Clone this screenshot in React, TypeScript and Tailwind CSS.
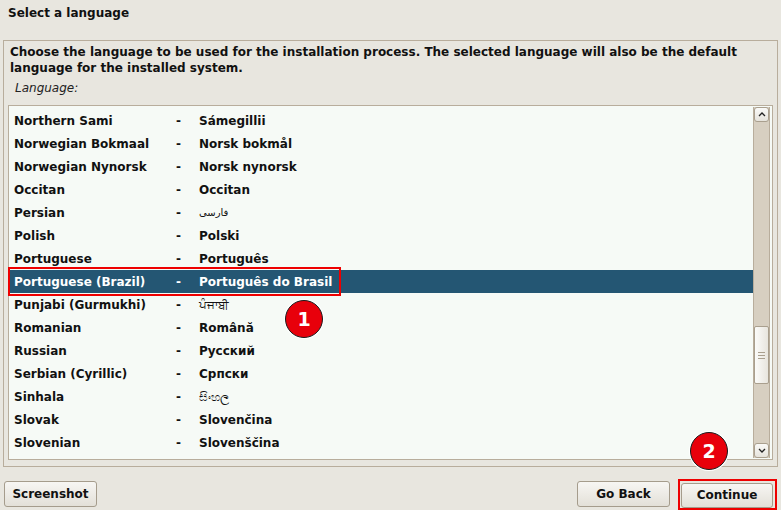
const rows: [string, string, boolean?][] = [
  ["Northern Sami", "Sámegillii"],
  ["Norwegian Bokmaal", "Norsk bokmål"],
  ["Norwegian Nynorsk", "Norsk nynorsk"],
  ["Occitan", "Occitan"],
  ["Persian", "فارسی", true],
  ["Polish", "Polski"],
  ["Portuguese", "Português"],
  ["Portuguese (Brazil)", "Português do Brasil"],
  ["Punjabi (Gurmukhi)", "ਪੰਜਾਬੀ", true],
  ["Romanian", "Română"],
  ["Russian", "Русский"],
  ["Serbian (Cyrillic)", "Српски"],
  ["Sinhala", "සිංහල", true],
  ["Slovak", "Slovenčina"],
  ["Slovenian", "Slovenščina"],
];

const SELECTED = 7;

function Badge({ n }: { n: number }) {
  return (
    <div className="absolute w-[38px] h-[38px] rounded-full bg-[#e8000b] border border-[#1a1a1a] shadow-[0_0_0_1px_#ffffff] flex items-center justify-center text-white text-[19px] font-bold">
      {n}
    </div>
  );
}

export default function App() {
  return (
    <div
      className="relative w-[781px] h-[510px] bg-[#e8e6df] text-[#111] flex flex-col overflow-hidden"
      style={{ fontFamily: '"DejaVu Sans", "Noto Sans", sans-serif' }}
    >
      {/* Title */}
      <div className="h-[40px] px-[8px] pt-[4px] text-[12px] font-bold leading-[18px]">Select a language</div>

      {/* Main panel */}
      <div className="mx-[3px] h-[427px] border border-[#b8ad9c] flex flex-col px-[4px] pb-[6px]">
        <p className="px-[2px] pt-[3px] text-[12px] font-bold leading-[16px]">
          Choose the language to be used for the installation process. The selected language will also be the default
          language for the installed system.
        </p>
        <div className="pl-[7px] pt-[4px] h-[29px] text-[12px] italic leading-[16px] text-[#222]">Language:</div>

        {/* List */}
        <div className="flex-1 border border-[#b8ad9c] bg-[#f6faf6] flex">
          <div className="flex-1 pt-[3px]">
            {rows.map(([name, native, plain], i) => {
              const sel = i === SELECTED;
              return (
                <div
                  key={name}
                  className={`h-[23px] flex items-center text-[12px] ${sel ? "bg-[#245673] text-white" : ""}`}
                >
                  <span className="w-[167px] pl-[5px] font-bold">{name}</span>
                  <span className="w-[23px] font-bold">-</span>
                  <span className={plain ? (i === 4 ? "text-[10px] font-normal" : "font-normal") : "font-bold"}>{native}</span>
                </div>
              );
            })}
          </div>

          {/* Scrollbar */}
          <div className="w-[17px] mr-[2px] my-[1px] bg-[#d7cfc1] border-x border-[#b8ad9c] flex flex-col">
            <div className="h-[15px] bg-gradient-to-b from-[#fafaf8] to-[#e6e3dc] border border-[#a99f8e] rounded-[3px] flex items-center justify-center">
              <svg width="8" height="5" viewBox="0 0 8 5"><path d="M1 4 L4 1 L7 4" stroke="#222" strokeWidth="1.3" fill="none" /></svg>
            </div>
            <div className="h-[204px]" />
            <div className="h-[58px] bg-gradient-to-r from-[#fbfbf9] to-[#e8e5de] border border-[#a99f8e] rounded-[2px] flex flex-col items-center justify-center gap-[2px]">
              <div className="w-[7px] h-px bg-[#a99f8e]" />
              <div className="w-[7px] h-px bg-[#a99f8e]" />
              <div className="w-[7px] h-px bg-[#a99f8e]" />
            </div>
            <div className="flex-1" />
            <div className="h-[15px] bg-gradient-to-b from-[#fafaf8] to-[#e6e3dc] border border-[#a99f8e] rounded-[3px] flex items-center justify-center">
              <svg width="8" height="5" viewBox="0 0 8 5"><path d="M1 1 L4 4 L7 1" stroke="#222" strokeWidth="1.3" fill="none" /></svg>
            </div>
          </div>
        </div>
      </div>

      {/* Buttons */}
      <div className="flex-1 flex items-start px-[4px] pt-[14px]">
        <button className="h-[26px] w-[93px] rounded-[3px] border border-[#a59c8c] bg-gradient-to-b from-[#f7f6f3] to-[#e3e0d8] text-[12px] font-bold">
          Screenshot
        </button>
        <div className="flex-1" />
        <button className="h-[26px] w-[93px] rounded-[3px] border border-[#a59c8c] bg-gradient-to-b from-[#f7f6f3] to-[#e3e0d8] text-[12px] font-bold">
          Go Back
        </button>
        <div className="ml-[8px] -mt-[2px] pt-[1px] pl-[1px] pr-[2px] pb-0 border-2 border-[#ee0000]">
          <button className="h-[25px] w-[92px] rounded-[3px] border border-[#a59c8c] bg-gradient-to-b from-[#f7f6f3] to-[#e3e0d8] text-[12px] font-bold">
            Continue
          </button>
        </div>
      </div>

      {/* Annotations */}
      <div className="absolute left-[8px] top-[267px] w-[333px] h-[29px] border-2 border-[#ee0000]" />
      <div className="absolute left-[285px] top-[300px]">
        <Badge n={1} />
      </div>
      <div className="absolute left-[690px] top-[432px]">
        <Badge n={2} />
      </div>
    </div>
  );
}
